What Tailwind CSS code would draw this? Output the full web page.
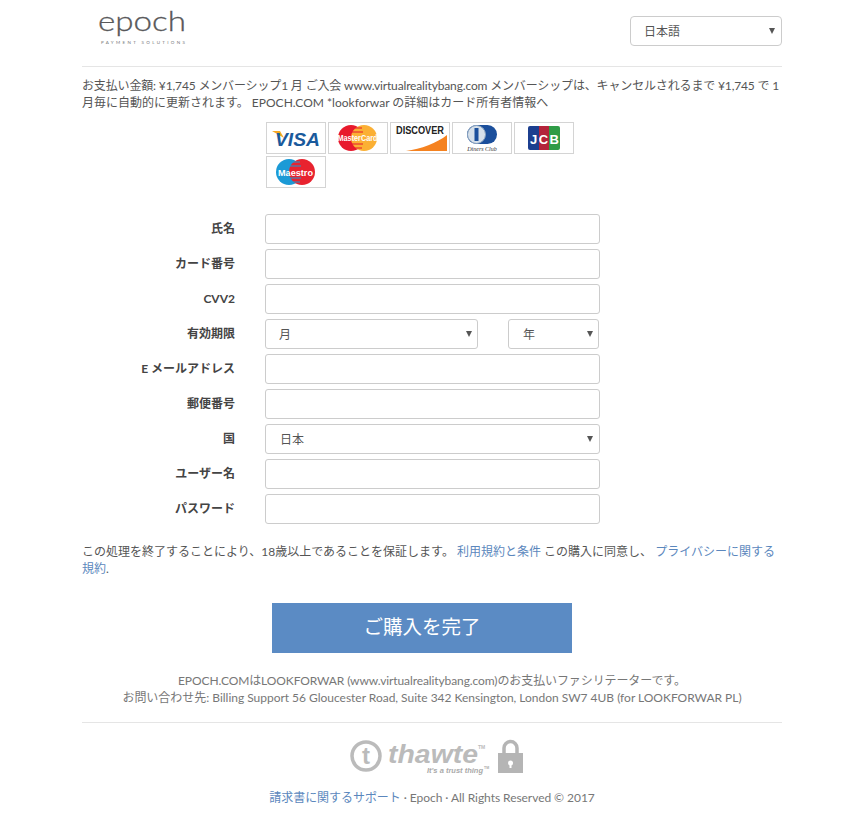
<!DOCTYPE html>
<html lang="ja">
<head>
  <meta charset="UTF-8" />
  <title>Epoch</title>
  <script src="https://cdn.jsdelivr.net/npm/@tailwindcss/browser@4"></script>
</head>
<body class="bg-white text-[#555] text-[12px] leading-[17px] font-['Lato','Noto_Sans_CJK_JP',sans-serif]">
  <div class="w-[700px] ml-[82px]">

    <!-- header -->
    <header class="h-[67px] border-b border-[#e5e5e5] flex justify-between">
      <svg class="ml-[15px] mt-[3px]" width="94" height="46" viewBox="0 0 94 46">
        <text x="1" y="28" font-family="Lato" font-size="28" font-weight="300" fill="#58585a" stroke="#58585a" stroke-width="0.3" textLength="88" lengthAdjust="spacingAndGlyphs">epoch</text>
        <text x="4" y="41" font-family="Lato" font-size="4.5" fill="#77787a" textLength="84" lengthAdjust="spacing">PAYMENT SOLUTIONS</text>
      </svg>
      <div class="relative mt-[16px] w-[152px] h-[30px]">
        <select class="appearance-none w-full h-full border border-[#ccc] rounded-[4px] pl-[13px] text-[12px] bg-white text-[#555]">
          <option>日本語</option>
        </select>
        <svg class="absolute right-[7px] top-[12px]" width="6" height="6" viewBox="0 0 6 6"><path d="M0 0h6L3 6z" fill="#555"/></svg>
      </div>
    </header>

    <p class="mt-[10px]"><span class="tracking-[-0.15px]">お支払い金額: ¥1,745 メンバーシップ1 月 ご入会 www.virtualrealitybang.com メンバーシップは、キャンセルされるまで ¥1,745 で 1</span><br />月毎に自動的に更新されます。 EPOCH.COM *lookforwar の詳細はカード所有者情報へ</p>

    <!-- cards -->
    <div class="ml-[184px] mt-[11px] w-[320px] flex flex-wrap gap-[2px]">
      <div class="w-[60px] h-[32px] border border-[#d4d4d4] flex items-center justify-center">
        <svg width="50" height="24" viewBox="0 0 50 24">
          <path d="M1 5h8l4 7z" fill="#f7a823"/>
          <text x="4" y="20" font-family="Liberation Sans" font-size="19" font-weight="700" font-style="italic" fill="#1a5a9c" textLength="45" lengthAdjust="spacingAndGlyphs">VISA</text>
        </svg>
      </div>
      <div class="w-[60px] h-[32px] border border-[#d4d4d4] flex items-center justify-center">
        <svg width="58" height="28" viewBox="-7 0 58 28">
          <circle cx="15" cy="14" r="13" fill="#e8192c"/>
          <circle cx="28" cy="14" r="13" fill="#fbb034"/>
          <path d="M17 4h9M16 8h11M16 20h11M17 24h9" stroke="#e8192c" stroke-width="1.2"/>
          <text x="21.5" y="17" text-anchor="middle" font-family="Liberation Sans" font-size="9" font-weight="700" fill="#fff" textLength="40" lengthAdjust="spacingAndGlyphs">MasterCard</text>
        </svg>
      </div>
      <div class="w-[60px] h-[32px] border border-[#d4d4d4] flex items-center justify-center">
        <svg width="58" height="30" viewBox="0 0 58 30">
          <path d="M15 28C30 26 46 20 56 12V28z" fill="#f58220"/>
          <text x="5" y="11" font-family="Liberation Sans" font-size="10" font-weight="700" fill="#222" textLength="48" lengthAdjust="spacingAndGlyphs">DISCOVER</text>
        </svg>
      </div>
      <div class="w-[60px] h-[32px] border border-[#d4d4d4] flex items-center justify-center">
        <svg width="44" height="28" viewBox="0 0 44 28">
          <rect x="7" y="1" width="30" height="19" rx="9.5" fill="#1b4f9c"/>
          <circle cx="16.5" cy="10.5" r="9" fill="#d6e0ea" stroke="#8aa3bf"/>
          <rect x="14.5" y="4" width="4" height="13" fill="#1b4f9c"/>
          <text x="22" y="27" text-anchor="middle" font-family="Liberation Serif" font-size="6" font-style="italic" fill="#333">Diners Club</text>
        </svg>
      </div>
      <div class="w-[60px] h-[32px] border border-[#d4d4d4] flex items-center justify-center">
        <svg width="34" height="26" viewBox="0 0 34 26">
          <path d="M1 3a2 2 0 0 1 2-2h9v24H3a2 2 0 0 1-2-2z" fill="#1c3f8f"/>
          <rect x="12" y="1" width="10" height="24" fill="#b3243a"/>
          <path d="M22 1h9a2 2 0 0 1 2 2v20a2 2 0 0 1-2 2h-9z" fill="#2f9b46"/>
          <text x="3" y="19" font-family="Liberation Sans" font-size="13" font-weight="700" fill="#fff" textLength="29" lengthAdjust="spacing">JCB</text>
        </svg>
      </div>
      <div class="w-[60px] h-[32px] border border-[#d4d4d4] flex items-center justify-center">
        <svg width="44" height="28" viewBox="0 0 44 28">
          <circle cx="15" cy="14" r="13" fill="#1b9ad6"/>
          <circle cx="28" cy="14" r="13" fill="#e8232f"/>
          <path d="M17 4h9M16 8h11M16 20h11M17 24h9" stroke="#1b9ad6" stroke-width="1.2"/>
          <text x="21.5" y="17.5" text-anchor="middle" font-family="Liberation Sans" font-size="9" font-weight="700" fill="#fff" textLength="35" lengthAdjust="spacingAndGlyphs">Maestro</text>
        </svg>
      </div>
    </div>

    <!-- form -->
    <form class="mt-[26px] flex flex-col gap-[5px]">
      <div class="flex items-center h-[30px]">
        <label class="w-[153px] pb-[2px] text-right font-bold text-[#444]">氏名</label>
        <input class="ml-[30px] w-[335px] h-[30px] border border-[#ccc] rounded-[3px]" />
      </div>
      <div class="flex items-center h-[30px]">
        <label class="w-[153px] pb-[2px] text-right font-bold text-[#444]">カード番号</label>
        <input class="ml-[30px] w-[335px] h-[30px] border border-[#ccc] rounded-[3px]" />
      </div>
      <div class="flex items-center h-[30px]">
        <label class="w-[153px] pb-[2px] text-right font-bold text-[#444]">CVV2</label>
        <input class="ml-[30px] w-[335px] h-[30px] border border-[#ccc] rounded-[3px]" />
      </div>
      <div class="flex items-center h-[30px]">
        <label class="w-[153px] pb-[2px] text-right font-bold text-[#444]">有効期限</label>
        <div class="relative ml-[30px] w-[213px] h-[30px]">
          <select class="appearance-none w-full h-full border border-[#ccc] rounded-[3px] pl-[13px] text-[12px] bg-white text-[#555]"><option>月</option></select>
          <svg class="absolute right-[6px] top-[12px]" width="6" height="6" viewBox="0 0 6 6"><path d="M0 0h6L3 6z" fill="#555"/></svg>
        </div>
        <div class="relative ml-[30px] w-[91px] h-[30px]">
          <select class="appearance-none w-full h-full border border-[#ccc] rounded-[3px] pl-[14px] text-[12px] bg-white text-[#555]"><option>年</option></select>
          <svg class="absolute right-[6px] top-[12px]" width="6" height="6" viewBox="0 0 6 6"><path d="M0 0h6L3 6z" fill="#555"/></svg>
        </div>
      </div>
      <div class="flex items-center h-[30px]">
        <label class="w-[153px] pb-[2px] text-right font-bold text-[#444]">E メールアドレス</label>
        <input class="ml-[30px] w-[335px] h-[30px] border border-[#ccc] rounded-[3px]" />
      </div>
      <div class="flex items-center h-[30px]">
        <label class="w-[153px] pb-[2px] text-right font-bold text-[#444]">郵便番号</label>
        <input class="ml-[30px] w-[335px] h-[30px] border border-[#ccc] rounded-[3px]" />
      </div>
      <div class="flex items-center h-[30px]">
        <label class="w-[153px] pb-[2px] text-right font-bold text-[#444]">国</label>
        <div class="relative ml-[30px] w-[335px] h-[30px]">
          <select class="appearance-none w-full h-full border border-[#ccc] rounded-[3px] pl-[14px] text-[12px] bg-white text-[#555]"><option>日本</option></select>
          <svg class="absolute right-[7px] top-[12px]" width="6" height="6" viewBox="0 0 6 6"><path d="M0 0h6L3 6z" fill="#555"/></svg>
        </div>
      </div>
      <div class="flex items-center h-[30px]">
        <label class="w-[153px] pb-[2px] text-right font-bold text-[#444]">ユーザー名</label>
        <input class="ml-[30px] w-[335px] h-[30px] border border-[#ccc] rounded-[3px]" />
      </div>
      <div class="flex items-center h-[30px]">
        <label class="w-[153px] pb-[2px] text-right font-bold text-[#444]">パスワード</label>
        <input class="ml-[30px] w-[335px] h-[30px] border border-[#ccc] rounded-[3px]" />
      </div>
    </form>

    <p class="mt-[19px]">この処理を終了することにより、18歳以上であることを保証します。 <a class="text-[#5b87bd]">利用規約と条件</a> この購入に同意し、 <a class="text-[#5b87bd]">プライバシーに関する規約</a>.</p>

    <button class="block ml-[190px] mt-[26px] w-[300px] h-[50px] pb-[3px] bg-[#5b8bc4] text-white text-[19.5px]">ご購入を完了</button>

    <div class="mt-[19px] text-center text-[#777]">
      <p class="tracking-[-0.1px]">EPOCH.COMはLOOKFORWAR (www.virtualrealitybang.com)のお支払いファシリテーターです。</p>
      <p class="tracking-[-0.02px]">お問い合わせ先: Billing Support 56 Gloucester Road, Suite 342 Kensington, London SW7 4UB (for LOOKFORWAR PL)</p>
    </div>

    <!-- footer -->
    <footer class="mt-[16px] border-t border-[#e5e5e5] flex flex-col">
      <svg class="mt-[15px] ml-[268px]" width="176" height="38" viewBox="0 0 176 38">
        <circle cx="16" cy="18" r="14" fill="none" stroke="#bbb" stroke-width="3.5"/>
        <text x="16" y="26" text-anchor="middle" font-family="Liberation Sans" font-size="24" font-weight="700" fill="#bbb">t</text>
        <text x="38" y="25" font-family="Liberation Sans" font-size="26" font-weight="700" font-style="italic" fill="#bbb" textLength="90" lengthAdjust="spacingAndGlyphs">thawte</text>
        <text x="128" y="11" font-family="Liberation Sans" font-size="5" font-weight="700" fill="#bbb">TM</text>
        <text x="77" y="35" font-family="Liberation Sans" font-size="8" font-weight="700" font-style="italic" fill="#aaa" textLength="56" lengthAdjust="spacingAndGlyphs">It's a trust thing</text>
        <text x="134" y="31" font-family="Liberation Sans" font-size="3.5" font-weight="700" fill="#aaa">TM</text>
        <path d="M154 15v-5a6.5 6.5 0 0 1 13 0v5" fill="none" stroke="#b5b5b5" stroke-width="3.5"/>
        <rect x="148" y="15" width="25" height="20" fill="#b5b5b5"/>
        <circle cx="160.5" cy="25" r="2.5" fill="#fff"/>
        <rect x="159.5" y="25" width="2" height="5" fill="#fff"/>
      </svg>
      <p class="mt-[13px] text-center text-[#777] tracking-[-0.05px]"><a class="text-[#5b87bd]">請求書に関するサポート</a> · Epoch · All Rights Reserved © 2017</p>
    </footer>
  </div>
</body>
</html>
